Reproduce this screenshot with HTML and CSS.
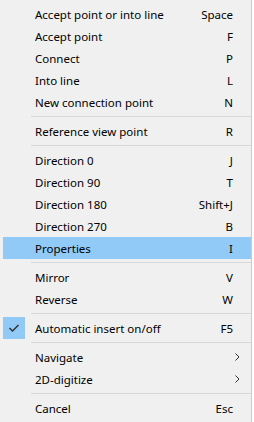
FILE: index.html
```html
<!DOCTYPE html>
<html lang="en">
<head>
    <meta charset="UTF-8">
    <meta name="viewport" content="width=device-width, initial-scale=1.0">
    <title>Context menu</title>
    <link rel="stylesheet" href="styles.css">
</head>
<body>
    <div class="menu">
        <div class="item"><span class="icon"></span><span class="label">Accept point or into line</span><span class="key">Space</span></div>
        <div class="item"><span class="icon"></span><span class="label">Accept point</span><span class="key">F</span></div>
        <div class="item"><span class="icon"></span><span class="label">Connect</span><span class="key">P</span></div>
        <div class="item"><span class="icon"></span><span class="label">Into line</span><span class="key">L</span></div>
        <div class="item"><span class="icon"></span><span class="label">New connection point</span><span class="key">N</span></div>
        <div class="sep"></div>
        <div class="item"><span class="icon"></span><span class="label">Reference view point</span><span class="key">R</span></div>
        <div class="sep"></div>
        <div class="item"><span class="icon"></span><span class="label">Direction 0</span><span class="key">J</span></div>
        <div class="item"><span class="icon"></span><span class="label">Direction 90</span><span class="key">T</span></div>
        <div class="item"><span class="icon"></span><span class="label">Direction 180</span><span class="key">Shift+J</span></div>
        <div class="item"><span class="icon"></span><span class="label">Direction 270</span><span class="key">B</span></div>
        <div class="item active"><span class="icon"></span><span class="label">Properties</span><span class="key">I</span></div>
        <div class="sep"></div>
        <div class="item"><span class="icon"></span><span class="label">Mirror</span><span class="key">V</span></div>
        <div class="item"><span class="icon"></span><span class="label">Reverse</span><span class="key">W</span></div>
        <div class="sep"></div>
        <div class="item">
            <span class="icon checked">
                <svg width="12" height="10" viewBox="0 0 12 10"><path d="M1.5 5 L4.5 8 L10.5 2" fill="none" stroke="#333" stroke-width="1.5"/></svg>
            </span>
            <span class="label">Automatic insert on/off</span><span class="key">F5</span>
        </div>
        <div class="sep"></div>
        <div class="item"><span class="icon"></span><span class="label">Navigate</span><span class="key arrow"><svg width="5" height="8" viewBox="0 0 5 8"><path d="M0.5 0.5 L4 4 L0.5 7.5" fill="none" stroke="#333" stroke-width="1"/></svg></span></div>
        <div class="item"><span class="icon"></span><span class="label">2D-digitize</span><span class="key arrow"><svg width="5" height="8" viewBox="0 0 5 8"><path d="M0.5 0.5 L4 4 L0.5 7.5" fill="none" stroke="#333" stroke-width="1"/></svg></span></div>
        <div class="sep"></div>
        <div class="item"><span class="icon"></span><span class="label">Cancel</span><span class="key">Esc</span></div>
    </div>
</body>
</html>
```

FILE: styles.css
```css
body {
    margin: 0;
    background-color: #ffffff;
    font-family: "Noto Sans", "Liberation Sans", sans-serif;
    font-size: 11.5px;
    color: #000;
}
.menu {
    width: 252px;
    height: 422px;
    box-sizing: border-box;
    padding: 3px 0 0 3px;
    background-color: #f0f0f0;
    border-right: 1px solid #cccccc;
    overflow: hidden;
}
.item {
    display: flex;
    align-items: center;
    height: 22px;
    width: 248px;
}
.item.active {
    background-color: #91c9f7;
}
.icon {
    width: 22px;
    height: 22px;
    margin-right: 10px;
    display: flex;
    align-items: center;
    justify-content: center;
}
.icon.checked {
    background-color: #91c9f7;
}
.label {
    flex: 1;
    white-space: nowrap;
}
.key {
    margin-right: 18px;
    white-space: nowrap;
}
.key.arrow {
    margin-right: 11px;
    display: flex;
    align-items: center;
}
.sep {
    height: 7px;
    margin-left: 28px;
    width: 220px;
    display: flex;
    align-items: center;
}
.sep::before {
    content: "";
    display: block;
    width: 100%;
    height: 1px;
    background-color: #d7d7d7;
}
```
